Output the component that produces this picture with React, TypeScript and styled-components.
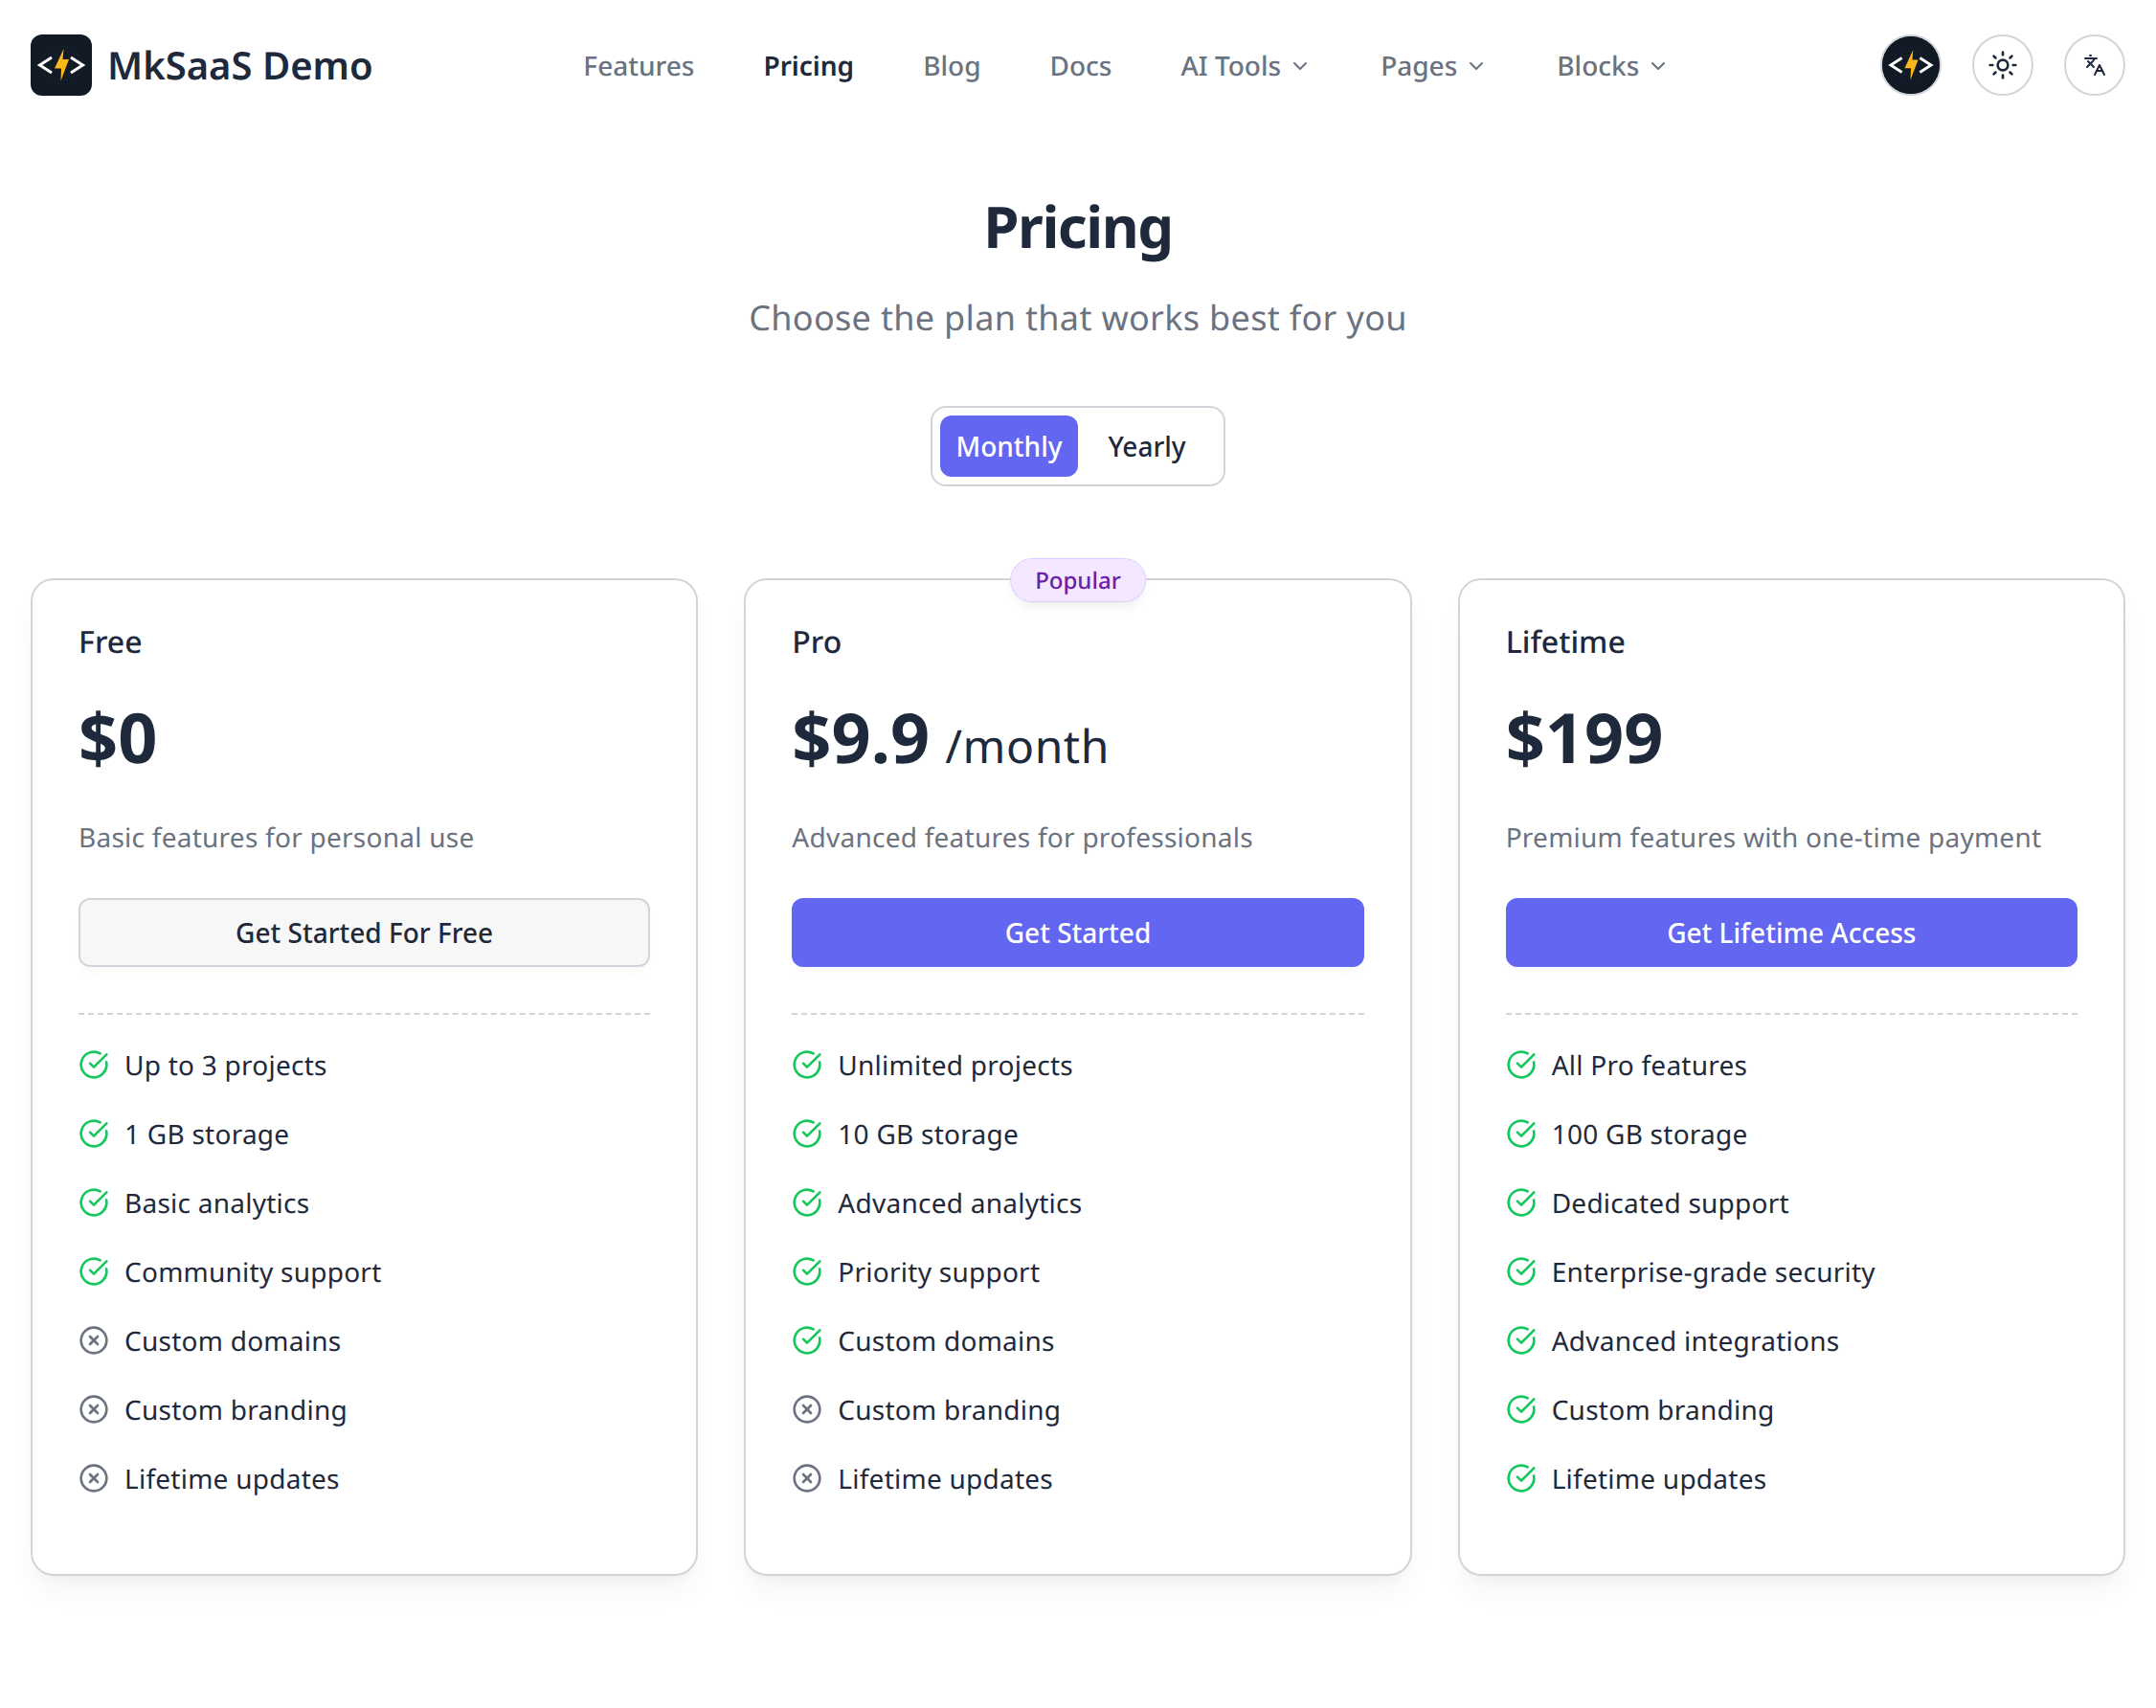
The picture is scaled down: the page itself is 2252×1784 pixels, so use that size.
import React from 'react';
import styled, { createGlobalStyle } from 'styled-components';
import { ChevronDown, CircleCheckBig, CircleX, Languages, Sun } from 'lucide-react';

const GlobalStyle = createGlobalStyle`
  * {
    box-sizing: border-box;
  }

  html,
  body {
    margin: 0;
    background: #fff;
    font-family: 'Noto Sans', 'Open Sans', sans-serif;
    color: #1e293b;
    text-rendering: geometricPrecision;
  }
`;

const Page = styled.div`
  width: 2252px;
  min-height: 1784px;
  padding: 36px 32px 0;
`;

const Header = styled.header`
  display: flex;
  align-items: center;
  justify-content: space-between;
  height: 64px;
`;

const Brand = styled.a`
  display: flex;
  align-items: center;
  gap: 16px;
  font-size: 40px;
  font-weight: 600;
  line-height: 56px;
  color: #1e293b;
`;

const Nav = styled.nav`
  display: flex;
  align-items: center;
  gap: 8px;
`;

const NavItem = styled.a<{ $active?: boolean }>`
  display: flex;
  align-items: center;
  gap: 8px;
  padding: 2px 32px 0;
  height: 64px;
  font-size: 28px;
  font-weight: ${({ $active }) => ($active ? 600 : 500)};
  color: ${({ $active }) => ($active ? '#1e293b' : '#6b7280')};

  svg {
    color: #6b7280;
  }
`;

const HeaderActions = styled.div`
  display: flex;
  align-items: center;
  gap: 32px;
`;

const RoundButton = styled.button<{ $dark?: boolean }>`
  display: flex;
  align-items: center;
  justify-content: center;
  width: 64px;
  height: 64px;
  padding: 0;
  border: 2px solid #d1d5db;
  border-radius: 50%;
  background: ${({ $dark }) => ($dark ? '#111a24' : '#fff')};
  color: #1e293b;
  overflow: hidden;
`;

const Intro = styled.section`
  display: flex;
  flex-direction: column;
  align-items: center;
  padding-top: 100px;
`;

const Title = styled.h1`
  margin: 0;
  font-size: 60px;
  font-weight: 700;
  line-height: 72px;
  letter-spacing: -0.025em;
  color: #1e293b;
`;

const Subtitle = styled.p`
  margin: 32px 0 0;
  font-size: 36px;
  line-height: 56px;
  letter-spacing: 0.009em;
  color: #6b7280;
`;

const Toggle = styled.div`
  display: flex;
  margin-top: 64px;
  padding: 8px;
  border: 2px solid #d1d5db;
  border-radius: 16px;
`;

const ToggleOption = styled.button<{ $active?: boolean }>`
  width: 144px;
  height: 64px;
  padding: 0;
  border: 0;
  border-radius: 12px;
  background: ${({ $active }) => ($active ? '#6366f1' : 'transparent')};
  color: ${({ $active }) => ($active ? '#fff' : '#1e293b')};
  font: inherit;
  font-size: 28px;
  font-weight: 500;
`;

const Cards = styled.section`
  display: grid;
  grid-template-columns: repeat(3, 1fr);
  gap: 48px;
  margin-top: 96px;
`;

const Card = styled.article`
  position: relative;
  height: 1042px;
  padding: 43px 48px 0;
  border: 2px solid #d1d5db;
  border-radius: 24px;
  background: #fff;
  box-shadow: 0 20px 30px -6px rgba(0, 0, 0, 0.05), 0 8px 12px -8px rgba(0, 0, 0, 0.05);
`;

const Badge = styled.span`
  position: absolute;
  top: -23px;
  left: 50%;
  transform: translateX(-50%);
  display: flex;
  align-items: center;
  height: 46px;
  padding: 0 25px;
  border: 1px dotted #c4b5fd;
  border-radius: 23px;
  background: #f3e8ff;
  color: #6b21a8;
  font-size: 24px;
  font-weight: 500;
  box-shadow: 0 8px 12px -4px rgba(0, 0, 0, 0.08);
`;

const PlanName = styled.h3`
  margin: 0;
  font-size: 32px;
  font-weight: 500;
  line-height: 44px;
  color: #1e293b;
`;

const Price = styled.div`
  display: flex;
  align-items: baseline;
  gap: 16px;
  margin-top: 27px;
  height: 100px;
  line-height: 100px;
  font-size: 72px;
  font-weight: 700;
  color: #1e293b;
`;

const PriceUnit = styled.span`
  font-size: 48px;
  font-weight: 400;
  letter-spacing: 0.012em;
`;

const Description = styled.p`
  margin: 35px 0 0;
  font-size: 28px;
  line-height: 40px;
  letter-spacing: 0.009em;
  color: #6b7280;
`;

const PlanButton = styled.button<{ $primary?: boolean }>`
  display: block;
  width: 100%;
  height: 72px;
  margin-top: 43px;
  padding: 0;
  border: ${({ $primary }) => ($primary ? '0' : '2px solid #d1d5db')};
  border-radius: 12px;
  background: ${({ $primary }) => ($primary ? '#6366f1' : '#f7f7f8')};
  color: ${({ $primary }) => ($primary ? '#fff' : '#1e293b')};
  font: inherit;
  font-size: 28px;
  font-weight: 500;
  box-shadow: 0 8px 12px -4px rgba(0, 0, 0, 0.03);
`;

const Divider = styled.hr`
  margin: 48px 0 0;
  border: 0;
  border-top: 2px dashed #d1d5db;
`;

const FeatureList = styled.ul`
  display: flex;
  flex-direction: column;
  gap: 32px;
  margin: 33px 0 0;
  padding: 0;
  list-style: none;
`;

const Feature = styled.li`
  display: flex;
  align-items: center;
  gap: 16px;
  height: 40px;
  font-size: 28px;
  line-height: 40px;
  letter-spacing: 0.009em;
  color: #1e293b;
`;

const CheckIcon = styled(CircleCheckBig)`
  flex: none;
  margin-bottom: 2px;
  color: #16c75e;
`;

const CrossIcon = styled(CircleX)`
  flex: none;
  margin-bottom: 2px;
  color: #6b7280;
`;

// dotted halo behind the bolt in the logo
const haloDots: { x: number; y: number; r: number }[] = [];
for (let ring = 1; ring <= 5; ring++) {
  const count = ring * 9;
  for (let i = 0; i < count; i++) {
    const angle = (i / count) * Math.PI * 2;
    haloDots.push({
      x: 32 + Math.cos(angle) * ring * 4,
      y: 32 + Math.sin(angle) * ring * 4,
      r: 0.4,
    });
  }
}

const LogoMark = ({ size = 64, round = false }: { size?: number; round?: boolean }) => (
  <svg width={size} height={size} viewBox="0 0 64 64" style={{ display: 'block', flex: 'none' }}>
    {round ? <circle cx="32" cy="32" r="32" fill="#111a24" /> : <rect width="64" height="64" rx="12" fill="#111a24" />}
    {haloDots.map((dot, i) => (
      <circle key={i} cx={dot.x} cy={dot.y} r={dot.r} fill="#3b4658" />
    ))}
    <path d="M22 24 L9.5 32 L22 40" fill="none" stroke="#fff" strokeWidth="3" />
    <path d="M42 24 L54.5 32 L42 40" fill="none" stroke="#fff" strokeWidth="3" />
    <path d="M34.5 15 L25 35.5 L32 35.5 L31.5 48.5 L40 26 L33.5 26 Z" fill="#fbb81c" />
  </svg>
);

type FeatureRow = { label: string; included: boolean };

type Plan = {
  name: string;
  price: string;
  unit?: string;
  description: string;
  cta: string;
  primary?: boolean;
  popular?: boolean;
  features: FeatureRow[];
};

const row = (label: string, included = true): FeatureRow => ({ label, included });

const plans: Plan[] = [
  {
    name: 'Free',
    price: '$0',
    description: 'Basic features for personal use',
    cta: 'Get Started For Free',
    features: [
      row('Up to 3 projects'),
      row('1 GB storage'),
      row('Basic analytics'),
      row('Community support'),
      row('Custom domains', false),
      row('Custom branding', false),
      row('Lifetime updates', false),
    ],
  },
  {
    name: 'Pro',
    price: '$9.9',
    unit: '/month',
    description: 'Advanced features for professionals',
    cta: 'Get Started',
    primary: true,
    popular: true,
    features: [
      row('Unlimited projects'),
      row('10 GB storage'),
      row('Advanced analytics'),
      row('Priority support'),
      row('Custom domains'),
      row('Custom branding', false),
      row('Lifetime updates', false),
    ],
  },
  {
    name: 'Lifetime',
    price: '$199',
    description: 'Premium features with one-time payment',
    cta: 'Get Lifetime Access',
    primary: true,
    features: [
      row('All Pro features'),
      row('100 GB storage'),
      row('Dedicated support'),
      row('Enterprise-grade security'),
      row('Advanced integrations'),
      row('Custom branding'),
      row('Lifetime updates'),
    ],
  },
];

const navItems = [
  { label: 'Features' },
  { label: 'Pricing', active: true },
  { label: 'Blog' },
  { label: 'Docs' },
  { label: 'AI Tools', menu: true },
  { label: 'Pages', menu: true },
  { label: 'Blocks', menu: true },
];

export default function App() {
  return (
    <Page>
      <GlobalStyle />
      <Header>
        <Brand>
          <LogoMark />
          MkSaaS Demo
        </Brand>
        <Nav>
          {navItems.map((item) => (
            <NavItem key={item.label} $active={item.active}>
              {item.label}
              {item.menu && <ChevronDown size={24} />}
            </NavItem>
          ))}
        </Nav>
        <HeaderActions>
          <RoundButton $dark>
            <LogoMark size={60} round />
          </RoundButton>
          <RoundButton>
            <Sun size={32} />
          </RoundButton>
          <RoundButton>
            <Languages size={24} />
          </RoundButton>
        </HeaderActions>
      </Header>

      <Intro>
        <Title>Pricing</Title>
        <Subtitle>Choose the plan that works best for you</Subtitle>
        <Toggle>
          <ToggleOption $active>Monthly</ToggleOption>
          <ToggleOption>Yearly</ToggleOption>
        </Toggle>
      </Intro>

      <Cards>
        {plans.map((plan) => (
          <Card key={plan.name}>
            {plan.popular && <Badge>Popular</Badge>}
            <PlanName>{plan.name}</PlanName>
            <Price>
              {plan.price}
              {plan.unit && <PriceUnit>{plan.unit}</PriceUnit>}
            </Price>
            <Description>{plan.description}</Description>
            <PlanButton $primary={plan.primary}>{plan.cta}</PlanButton>
            <Divider />
            <FeatureList>
              {plan.features.map((feature) => (
                <Feature key={feature.label}>
                  {feature.included ? <CheckIcon size={32} /> : <CrossIcon size={32} />}
                  {feature.label}
                </Feature>
              ))}
            </FeatureList>
          </Card>
        ))}
      </Cards>
    </Page>
  );
}
